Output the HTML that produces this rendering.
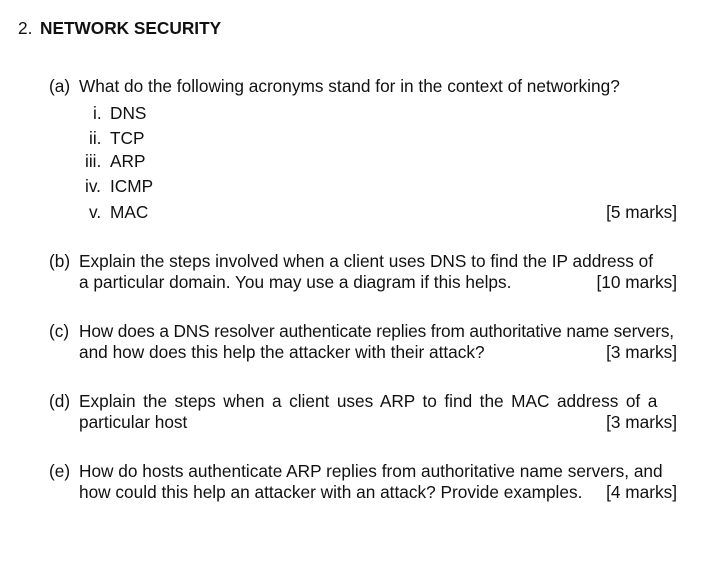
<!DOCTYPE html>
<html><head><meta charset="utf-8"><style>
body{margin:0;width:716px;height:582px;background:#fff;font-family:"Liberation Sans",Arial,sans-serif;font-size:17.25px;color:#111;position:relative;overflow:hidden}
.l{position:absolute;line-height:20px;white-space:nowrap}
.r{position:absolute;right:39px;line-height:20px;white-space:nowrap}
</style></head><body>
<div class="l" style="left:18px;top:18px">2.</div>
<div class="l" style="left:40px;top:18px;font-weight:bold">NETWORK SECURITY</div>

<div class="l" style="left:49px;top:76px">(a)</div>
<div class="l" style="left:79px;top:76px">What do the following acronyms stand for in the context of networking?</div>
<div class="l" style="left:93px;top:103px">i.</div><div class="l" style="left:110px;top:103px">DNS</div>
<div class="l" style="left:89px;top:128px">ii.</div><div class="l" style="left:110px;top:128px">TCP</div>
<div class="l" style="left:85px;top:151px">iii.</div><div class="l" style="left:110px;top:151px">ARP</div>
<div class="l" style="left:85px;top:176px">iv.</div><div class="l" style="left:110px;top:176px">ICMP</div>
<div class="l" style="left:89px;top:202px">v.</div><div class="l" style="left:110px;top:202px">MAC</div>
<div class="r" style="top:202px">[5 marks]</div>

<div class="l" style="left:49px;top:251px">(b)</div>
<div class="l" style="left:79px;top:251px">Explain the steps involved when a client uses DNS to find the IP address of</div>
<div class="l" style="left:79px;top:272px">a particular domain. You may use a diagram if this helps.</div>
<div class="r" style="top:272px">[10 marks]</div>

<div class="l" style="left:49px;top:321px">(c)</div>
<div class="l" style="left:79px;top:321px;letter-spacing:-0.13px">How does a DNS resolver authenticate replies from authoritative name servers,</div>
<div class="l" style="left:79px;top:342px">and how does this help the attacker with their attack?</div>
<div class="r" style="top:342px">[3 marks]</div>

<div class="l" style="left:49px;top:391px">(d)</div>
<div class="l" style="left:79px;top:391px;word-spacing:2.7px">Explain the steps when a client uses ARP to find the MAC address of a</div>
<div class="l" style="left:79px;top:412px">particular host</div>
<div class="r" style="top:412px">[3 marks]</div>

<div class="l" style="left:49px;top:461px">(e)</div>
<div class="l" style="left:79px;top:461px">How do hosts authenticate ARP replies from authoritative name servers, and</div>
<div class="l" style="left:79px;top:482px">how could this help an attacker with an attack? Provide examples.</div>
<div class="r" style="top:482px">[4 marks]</div>
</body></html>
